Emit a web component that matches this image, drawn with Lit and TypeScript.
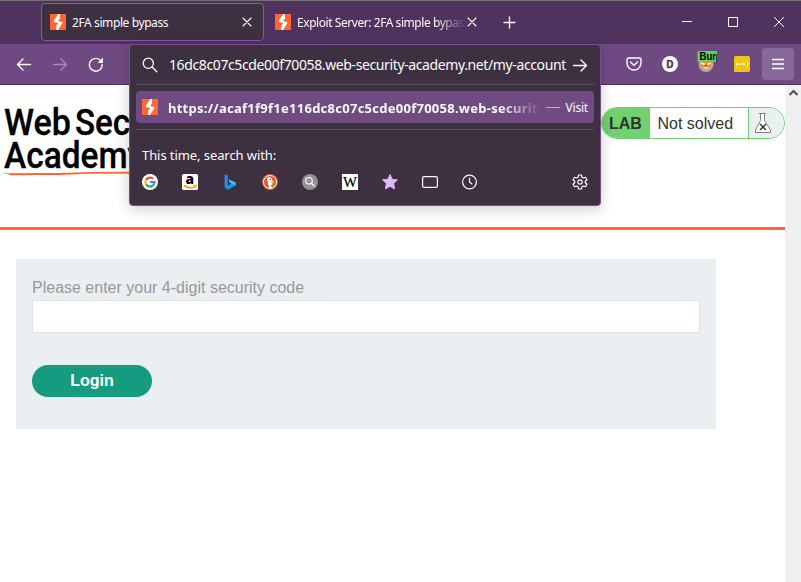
import { LitElement, html, css, svg } from "lit";
import { customElement } from "lit/decorators.js";

const portswigger = html`<svg class="ico" width="16" height="16" viewBox="0 0 16 16">
  <rect width="16" height="16" fill="#ff6633"/>
  <path d="M8.2 0H10V4.4L8 6.9 12.3 8.1V9.3L8 16H6.3V11.6L8.3 9.1 3.8 7.9V6.7Z" fill="#fff"/>
</svg>`;

const line = (d: string, w = 1.3, color = "#fbfbfe") =>
  svg`<path d=${d} fill="none" stroke=${color} stroke-width=${w} stroke-linecap="round" stroke-linejoin="round"/>`;

const cross = html`<svg class="ico" width="10" height="10" viewBox="0 0 10 10">${line("M1 1 9 9M9 1 1 9", 1.1)}</svg>`;

const engines = [
  svg`<circle cx="8" cy="8" r="8" fill="#fff"/><g fill="none" stroke-width="2.2"><path d="M11.2 4.8A4.6 4.6 0 0 0 4 5.8" stroke="#ea4335"/><path d="M4 5.8A4.6 4.6 0 0 0 4 10.2" stroke="#fbbc05"/><path d="M4 10.2A4.6 4.6 0 0 0 10.8 11.6" stroke="#34a853"/><path d="M10.8 11.6A4.6 4.6 0 0 0 12.5 8H8" stroke="#4285f4"/></g>`,
  svg`<rect width="16" height="16" rx="1.5" fill="#fff"/><text x="7.7" y="9.8" text-anchor="middle" font-family="Open Sans, sans-serif" font-weight="800" font-size="14.5" textLength="8.5" lengthAdjust="spacingAndGlyphs">a</text><path d="M2 11.5Q7.5 15.6 13.2 12.4" fill="none" stroke="#f90" stroke-width="1.6"/><path d="M11.6 11.3 14.4 11.1 13.6 13.6" fill="none" stroke="#f90"/>`,
  svg`<path d="M2.6 .4 5.8 1.6V12.2L2.6 13.6Z" fill="#2b8cf0"/><path d="M2.6 13.4 5.8 11.6 9.6 9.6 7.8 8.6 6.6 5.2 13.6 8.4V11.6L5.8 15.8Z" fill="#1e90e8"/><path d="M6.6 5.2 13.6 8.4V11.6L9.6 9.6 7.8 8.6Z" fill="#36c5e8"/>`,
  svg`<circle cx="8" cy="8" r="8" fill="#de5833"/><circle cx="8" cy="8" r="6.5" fill="none" stroke="#fff" stroke-width="1"/><path d="M5 4.2Q7.2 2.4 9.6 4.2 11 6 10.4 8.4L10 13.7 7.3 14Q5.4 8 5 4.2Z" fill="#fff"/><path d="M8.8 7.5 12.3 7.2 12 9 8.8 9.2Z" fill="#fdd20a"/><path d="M8.6 11 11.5 10.4V13L8.6 12.4Z" fill="#65bc46"/><circle cx="8.4" cy="5.5" r=".7" fill="#2d4f8e"/>`,
  svg`<circle cx="8" cy="8" r="8" fill="#939395"/><circle cx="7" cy="6.8" r="3.3" fill="none" stroke="#fff" stroke-width="1.1"/>${line("M9.5 9.3 12.2 12", 1.3)}`,
  svg`<rect width="16" height="16" fill="#fff"/><text x="8" y="12.6" text-anchor="middle" font-family="Liberation Serif, serif" font-size="14" textLength="14" lengthAdjust="spacingAndGlyphs" stroke="#000" stroke-width=".2">W</text>`,
  svg`<path d="M8 .6 10.2 5.3 15.4 5.9 11.6 9.5 12.6 14.9 8 12.3 3.4 14.9 4.4 9.5 .6 5.9 5.8 5.3Z" fill="#dfb8fb" stroke="#dfb8fb" stroke-linejoin="round"/>`,
  svg`<rect x=".6" y="2.6" width="14.8" height="10.8" rx="1.4" fill="none" stroke="#fbfbfe" stroke-width="1.2"/>`,
  svg`<circle cx="7.5" cy="8" r="6.9" fill="none" stroke="#fbfbfe" stroke-width="1.2"/>${line("M7.5 4V8L10 10", 1.2)}`,
];

@customElement("browser-titlebar")
class BrowserTitlebar extends LitElement {
  static styles = css`
    :host { display: flex; height: 44px; box-sizing: border-box; border-top: 1px solid #73706f; background: #50325f; color: #fbfbfe; font: 12px/16px "Noto Sans", sans-serif; }
    .ico { display: block; flex: none; }
    .tab { display: flex; align-items: center; box-sizing: border-box; height: 38px; margin-top: 2px; padding: 0 11px 0 8px; }
    .active { width: 223px; margin-left: 41px; border: 1px solid #8a55a3; border-radius: 4px; background: #3c3041; }
    .other { width: 221px; margin-left: 3px; }
    .label { flex: 1; height: 16px; margin: 2px 4px 0 6px; overflow: hidden; white-space: nowrap; letter-spacing: -0.4px; }
    .fade { margin-right: 0; letter-spacing: -0.44px; -webkit-mask-image: linear-gradient(to left, transparent, #000 32px); }
    .plus { margin: 15px 0 0 15px; }
    .window { display: flex; margin: 15px 16px 0 auto; gap: 34px; }
  `;
  render() {
    return html`
      <div class="tab active">${portswigger}<span class="label">2FA simple bypass</span>${cross}</div>
      <div class="tab other">${portswigger}<span class="label fade">Exploit Server: 2FA simple bypass</span>${cross}</div>
      <svg class="ico plus" width="13" height="13" viewBox="0 0 13 13">${line("M6.5 1V12M1 6.5H12", 1.4)}</svg>
      <div class="window">
        <svg class="ico" width="12" height="12"><path d="M1 5.5H11" stroke="#fff"/></svg>
        <svg class="ico" width="12" height="12"><rect x="1.5" y="1.5" width="9" height="9" fill="none" stroke="#fff"/></svg>
        <svg class="ico" width="12" height="12"><path d="M1 1 11 11M11 1 1 11" stroke="#fff"/></svg>
      </div>`;
  }
}

@customElement("browser-toolbar")
class BrowserToolbar extends LitElement {
  static styles = css`
    :host { display: flex; align-items: center; justify-content: space-between; height: 41px; box-sizing: border-box; padding: 0 7px 0 16px; border-bottom: 1px solid #50325f; background: #6f4a82; }
    .group { display: flex; align-items: center; gap: 20px; }
    .ico { display: block; }
    .burp { margin: -6px -3px -6px -1px; }
    .menu { display: grid; place-items: center; width: 32px; height: 32px; margin-left: -8px; border-radius: 4px; background: #886899; }
    .badge { font: 700 10px "Liberation Sans", sans-serif; }
    .letter { font: 700 10px "Noto Sans", sans-serif; }
  `;
  render() {
    return html`
      <div class="group">
        <svg class="ico" width="16" height="16">${line("M1.5 8.5H14.5M7 3 1.5 8.5 7 14", 1.4)}</svg>
        <svg class="ico" width="16" height="16">${line("M1.5 8.5H14.5M9 3 14.5 8.5 9 14", 1.4, "#a78bb4")}</svg>
        <svg class="ico" width="16" height="16">${line("M14.2 8.7A6.4 6.4 0 1 1 11.8 3.8L13 4.9", 1.4)}<path d="M15 1.5V7H9.5Z" fill="#fbfbfe"/></svg>
      </div>
      <div class="group">
        <svg class="ico" width="16" height="16">${line("M2.6 2H13.4Q15 2 15 3.6V7A7 7 0 0 1 1 7V3.6Q1 2 2.6 2Z", 1.4)}${line("M4.5 6 8 9.3 11.5 6", 1.5)}</svg>
        <svg class="ico" width="16" height="16"><circle cx="8" cy="8" r="8" fill="#fff"/><text class="letter" x="8" y="11.7" text-anchor="middle" fill="#50325f" stroke="#50325f" stroke-width=".4">D</text></svg>
        <svg class="ico burp" width="20" height="28" viewBox="-1 -6 20 28">
          <circle cx="8" cy="8.5" r="7.5" fill="#b8a9a4"/><path d="M2 4H14L13.5 10Q8 16 2.5 10Z" fill="#ef8a35"/>
          <path d="M3 7.2 6.8 8.2M13 7.2 9.2 8.2" stroke="#fff" stroke-width="1.5"/><path d="M4.5 11.5Q8 10 11.5 11.5 8 14.5 4.5 11.5Z" fill="#ffd09a"/><path d="M7 9.5H9" stroke="#6d351b"/>
          <rect x="-.5" y="-5" width="20" height="11" rx="1.5" fill="#60cf66"/>
          <text class="badge" x="1.6" y="4.4" textLength="16.5" lengthAdjust="spacingAndGlyphs">Bur</text>
          <path d="M18.8 -1.5V6" stroke="#000" stroke-width=".9"/>
        </svg>
        <svg class="ico" width="16" height="16"><rect width="16" height="16" rx="1.5" fill="#f1c40f"/><g fill="#fff"><rect x="2" y="7" width="2" height="2"/><rect x="5.5" y="7" width="2" height="2"/><rect x="9" y="7" width="2" height="2"/><rect x="13" y="5" width="1" height="6"/></g></svg>
        <div class="menu"><svg class="ico" width="14" height="12"><path d="M1 1.5H13M1 6H13M1 10.5H13" stroke="#fff" stroke-width="1.3"/></svg></div>
      </div>`;
  }
}

@customElement("url-dropdown")
class UrlDropdown extends LitElement {
  static styles = css`
    :host { display: block; box-sizing: border-box; width: 472px; height: 162px; padding: 0 6px; border: 1px solid #7a4c91; border-radius: 4px; background: #3c3041; color: #fbfbfe; font-family: "Noto Sans", sans-serif; box-shadow: 0 3px 14px rgba(0,0,0,.2); }
    .ico { display: block; flex: none; }
    .field { display: flex; align-items: center; height: 40px; box-sizing: border-box; padding: 0 6px; border-bottom: 1px solid #59505f; }
    .url { flex: 1; height: 24px; margin: 0 5px 0 11px; font-size: 14px; line-height: 24px; white-space: nowrap; letter-spacing: -0.385px; }
    .row { display: flex; align-items: center; height: 32px; margin: 6px 0; padding: 0 6px; border-radius: 4px; background: #704b82; }
    .address { width: 373px; margin: 2px 0 0 10px; font-size: 13px; font-weight: 700; line-height: 20px; letter-spacing: 0.26px; white-space: nowrap; overflow: hidden; -webkit-mask-image: linear-gradient(to left, transparent, #000 42px); }
    .dash { width: 14px; height: 1px; margin: 1px 6px 0 5px; background: #c2b0cb; }
    .visit { font-size: 12px; letter-spacing: -0.2px; }
    .engines { border-top: 1px solid #59505f; padding: 15px 6px 0; }
    .caption { font-size: 13px; line-height: 20px; letter-spacing: -0.08px; white-space: nowrap; }
    .icons { display: flex; gap: 24px; margin-top: 9px; }
    .gear { margin-left: auto; }
  `;
  render() {
    return html`
      <div class="field">
        <svg class="ico" width="16" height="16">${line("M10.1 10.1 14.8 14.8", 1.4)}<circle cx="6.3" cy="6.3" r="5.1" fill="none" stroke="#fbfbfe" stroke-width="1.3"/></svg>
        <span class="url">16dc8c07c5cde00f70058.web-security-academy.net/my-account</span>
        <svg class="ico" width="16" height="16">${line("M1.5 8.5H14.5M9 3 14.5 8.5 9 14", 1.4)}</svg>
      </div>
      <div class="row">${portswigger}<span class="address">https://acaf1f9f1e116dc8c07c5cde00f70058.web-security-academy.net</span><i class="dash"></i><span class="visit">Visit</span></div>
      <div class="engines">
        <div class="caption">This time, search with:</div>
        <div class="icons">
          ${engines.map((e) => html`<svg class="ico" width="16" height="16">${e}</svg>`)}
          <svg class="ico gear" width="16" height="16">${line("M6.6 1H9.4L9.9 3.2 11.3 4 13.5 3.3 15 5.8 13.3 7.3V8.7L15 10.2 13.5 12.7 11.3 12 9.9 12.8 9.4 15H6.6L6.1 12.8 4.7 12 2.5 12.7 1 10.2 2.7 8.7V7.3L1 5.8 2.5 3.3 4.7 4 6.1 3.2Z", 1.2)}<circle cx="8" cy="8" r="2.2" fill="none" stroke="#fbfbfe" stroke-width="1.2"/></svg>
        </div>
      </div>`;
  }
}

@customElement("lab-page")
class LabPage extends LitElement {
  static styles = css`
    :host { display: flex; flex: 1; min-height: 0; background: #fff; color: #333; font: 16px/20px "Liberation Sans", Arial, sans-serif; }
    .body { width: 785px; }
    .head { display: flex; justify-content: space-between; height: 145px; box-sizing: border-box; border-bottom: 3px solid #ff6633; }
    .logo { display: block; }
    .word { font: 500 36.5px Roboto, sans-serif; fill: #000; stroke: #000; stroke-width: .3px; }
    .status { display: flex; box-sizing: border-box; width: 184px; height: 32px; margin-top: 22px; border: 1px solid #70d070; border-radius: 16px; overflow: hidden; line-height: 32px; }
    .lab { width: 48px; background: #70d16e; font-weight: 700; text-indent: 7px; }
    .state { flex: 1; padding-left: 7.5px; border-right: 1px solid #70d070; white-space: nowrap; }
    .flask { display: block; width: 35px; background: #eaeff2; }
    .form { box-sizing: border-box; width: 700px; height: 170px; margin: 29px 0 0 16px; padding: 19px 16px; background: #eaeff2; }
    .label { color: #999; }
    .code { display: block; box-sizing: border-box; width: 668px; height: 33px; margin: 2px 0 32px; border: 1px solid #e3e3e3; border-radius: 0; background: #fff; }
    .login { display: block; width: 120px; height: 32px; padding: 0; border: 0; border-radius: 16px; background: #159c80; color: #fff; font: 700 16px/32px "Liberation Sans", sans-serif; }
    .scroll { flex: 1; background: #f0f0f0; }
  `;
  render() {
    return html`
      <div class="body">
        <div class="head">
          <svg class="logo" width="160" height="100">
            <text class="word" x="4" y="50" textLength="67" lengthAdjust="spacingAndGlyphs">Web</text>
            <text class="word" x="75" y="50" textLength="121" lengthAdjust="spacingAndGlyphs">Security</text>
            <text class="word" x="4" y="82.5" textLength="140" lengthAdjust="spacingAndGlyphs">Academy</text>
            <path d="M1 88.3 60 87.9 92 87 158 86.6V88.4L90 88.8 60 90 10 90.2 9 89.2Z" fill="#ff6633"/>
          </svg>
          <div class="status">
            <span class="lab">LAB</span><span class="state">Not solved</span>
            <svg class="flask" width="35" height="30"><g fill="none" stroke="#808080"><path d="M10 5.5H17M11.5 6V12.5L6.5 22V24.5H21.5V22L15.5 12.5V6" fill="#fff"/><path d="M11 16 17 22M17 16 11 22" stroke="#333" stroke-width="1.4"/></g></svg>
          </div>
        </div>
        <div class="form">
          <div class="label">Please enter your 4-digit security code</div>
          <input class="code" type="text">
          <button class="login">Login</button>
        </div>
      </div>
      <div class="scroll"><svg width="16" height="17"><path d="M4.5 10 8.5 6 12.5 10" fill="none" stroke="#505050" stroke-width="2"/></svg></div>`;
  }
}

@customElement("app-root")
class AppRoot extends LitElement {
  static styles = css`
    :host { display: flex; flex-direction: column; position: relative; width: 801px; height: 582px; overflow: hidden; }
    .popup { position: absolute; left: 129px; top: 44px; }
  `;
  render() {
    return html`<browser-titlebar></browser-titlebar><browser-toolbar></browser-toolbar><lab-page></lab-page><url-dropdown class="popup"></url-dropdown>`;
  }
}
